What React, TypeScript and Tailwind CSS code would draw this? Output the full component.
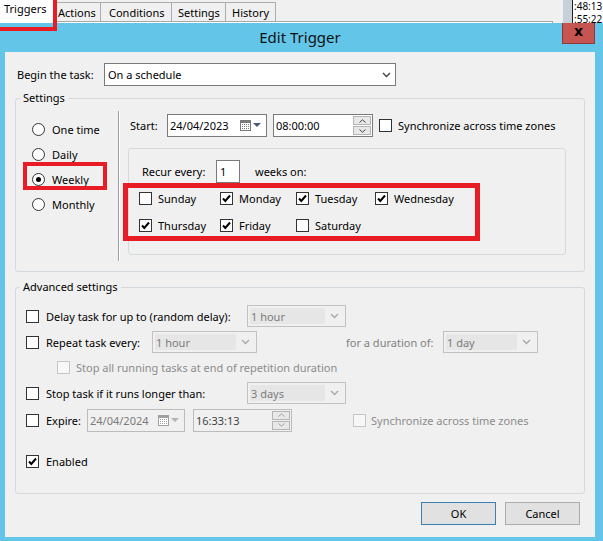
import React from 'react';

function Check({ checked = false, disabled = false }: { checked?: boolean; disabled?: boolean }) {
  return (
    <span
      className={`flex h-[13px] w-[13px] shrink-0 items-center justify-center border ${
        disabled ? 'border-[#c6c6c6] bg-[#f7f7f7]' : 'border-[#333] bg-white'
      }`}
    >
      {checked && (
        <svg width="11" height="11" viewBox="0 0 11 11">
          <path d="M2 5.5 L4.3 8 L9 2.5" fill="none" stroke="#000" strokeWidth="2" />
        </svg>
      )}
    </span>
  );
}

function Radio({ on = false }: { on?: boolean }) {
  return (
    <span className="flex h-[13px] w-[13px] shrink-0 items-center justify-center rounded-full border border-[#333] bg-white">
      {on && <span className="h-[5px] w-[5px] rounded-full bg-black" />}
    </span>
  );
}

function Chevron({ color }: { color: string }) {
  return (
    <svg width="9" height="6" viewBox="0 0 9 6">
      <path d="M1 1 L4.5 4.5 L8 1" fill="none" stroke={color} strokeWidth="1.4" />
    </svg>
  );
}

function Combo({ value, className }: { value: string; className: string }) {
  return (
    <div className={`flex h-[22px] items-stretch border border-[#c2c2c2] bg-[#f0f0f0] p-[2px] ${className}`}>
      <span className="flex flex-1 items-center bg-[#e6e6e6] pl-[1px] text-[#7c7c7c]">{value}</span>
      <span className="flex w-[18px] items-center justify-center">
        <Chevron color="#a8a8a8" />
      </span>
    </div>
  );
}

function CalIcon({ disabled = false }: { disabled?: boolean }) {
  const c = disabled ? '#a0a0a0' : '#7a7a7a';
  const cells = [];
  for (let r = 0; r < 3; r++) {
    for (let k = 0; k < 4; k++) {
      cells.push(<rect key={`${r}-${k}`} x={2 + k * 2} y={4 + r * 2} width="1" height="1" fill={c} />);
    }
  }
  return (
    <span className="flex items-center gap-[2px]">
      <svg width="11" height="11" viewBox="0 0 11 11">
        <rect x="0.5" y="0.5" width="10" height="10" fill="#fff" stroke={c} />
        <rect x="1" y="1" width="9" height="2" fill={c} />
        {cells}
      </svg>
      <svg width="8" height="5" viewBox="0 0 8 5">
        <path d="M0 0 H8 L4 4 Z" fill={disabled ? '#b4b4b4' : '#4a5a7a'} />
      </svg>
    </span>
  );
}

function DateBox({ value, disabled = false, className }: { value: string; disabled?: boolean; className: string }) {
  return (
    <div
      className={`flex h-[23px] items-center border pl-[2px] pr-[5px] ${className} ${
        disabled ? 'border-[#bcbcbc] bg-[#f0f0f0] text-[#7a7a7a]' : 'border-[#7a7a7a] bg-white text-black'
      }`}
    >
      <span className="flex-1">{value}</span>
      <CalIcon disabled={disabled} />
    </div>
  );
}

function Spin({ disabled = false }: { disabled?: boolean }) {
  const c = disabled ? '#a0a0a0' : '#444';
  return (
    <div className="flex h-full w-[18px] flex-col gap-[1px] py-[1px]">
      <span className="flex flex-1 items-center justify-center border border-[#b4b4b4] bg-[#e8e8e8]">
        <svg width="7" height="4" viewBox="0 0 7 4">
          <path d="M0.5 3.5 L3.5 0.8 L6.5 3.5" fill="none" stroke={c} strokeWidth="1" />
        </svg>
      </span>
      <span className="flex flex-1 items-center justify-center border border-[#b4b4b4] bg-[#e8e8e8]">
        <svg width="7" height="4" viewBox="0 0 7 4">
          <path d="M0.5 0.5 L3.5 3.2 L6.5 0.5" fill="none" stroke={c} strokeWidth="1" />
        </svg>
      </span>
    </div>
  );
}

function TimeBox({ value, disabled = false, className }: { value: string; disabled?: boolean; className: string }) {
  return (
    <div
      className={`flex h-[23px] items-center border pl-[2px] pr-[1px] ${className} ${
        disabled ? 'border-[#bcbcbc] bg-[#f0f0f0] text-[#444]' : 'border-[#7a7a7a] bg-white text-black'
      }`}
    >
      <span className="flex-1">{value}</span>
      <Spin disabled={disabled} />
    </div>
  );
}

const days = [
  { name: 'Sunday', on: false },
  { name: 'Monday', on: true },
  { name: 'Tuesday', on: true },
  { name: 'Wednesday', on: true },
  { name: 'Thursday', on: true },
  { name: 'Friday', on: true },
  { name: 'Saturday', on: false },
];

export default function App() {
  return (
    <div className="relative h-[541px] w-[603px] overflow-hidden bg-[#f0f0f0] font-['Noto_Sans',sans-serif] text-[11px] leading-[15px] text-black">
      {/* tab strip of the window behind */}
      <div className="flex h-[23px]">
        <div className="flex w-[563px] flex-col">
          <div className="flex h-[21px] items-end">
            <div className="flex h-[21px] w-[53px] items-start bg-white pl-[4px] pt-[1px]">Triggers</div>
            <div className="flex h-[19px] w-[48px] items-center border-r border-t border-[#acacac] pl-[5px]">Actions</div>
            <div className="flex h-[19px] w-[71px] items-center border-r border-t border-[#acacac] pl-[8px]">Conditions</div>
            <div className="flex h-[19px] w-[54px] items-center border-r border-t border-[#acacac] pl-[6px]">Settings</div>
            <div className="flex h-[19px] w-[50px] items-center border-r border-t border-[#acacac] pl-[6px]">History</div>
          </div>
          <div className="flex h-[2px]">
            <div className="w-[53px] bg-white" />
            <div className="w-[500px] border-r border-t border-[#a8a8a8] bg-white" />
          </div>
        </div>
        <div className="w-[9px] bg-[#c6d0d7]" />
        <div className="flex-1 overflow-hidden border-l border-[#222] bg-white pl-[1px] text-[10px] leading-[13px]">
          <div>:48:13</div>
          <div>:55:22</div>
        </div>
      </div>

      {/* Edit Trigger dialog */}
      <div className="flex flex-col bg-[#63c6e9] pb-[4px] pl-[5px] pr-[8px]">
        <div className="grid h-[29px] grid-cols-[1fr_auto_1fr] items-start">
          <div />
          <div className="pt-[5px] text-[15px] leading-[18px] text-[#111]">Edit Trigger</div>
          <div className="flex justify-end">
            <button className="flex h-[21px] w-[33px] items-center justify-center border-x border-b border-[#8a3c3c] bg-[#c65450] pb-[3px] font-['DejaVu_Sans',sans-serif] text-[14px] font-bold text-black">
              x
            </button>
          </div>
        </div>

        <div className="flex h-[485px] flex-col bg-[#f0f0f0]">
          <div className="flex items-center pl-[12px] pt-[11px]">
            <span className="w-[87px]">Begin the task:</span>
            <div className="flex h-[23px] w-[292px] items-center border border-[#7a7a7a] bg-white pl-[3px] pr-[4px]">
              <span className="flex-1">On a schedule</span>
              <Chevron color="#444" />
            </div>
          </div>

          <fieldset className="ml-[10px] mt-[4px] w-[570px] rounded-[3px] border border-[#d3d9dd]">
            <legend className="ml-[4px] px-[3px] leading-[16px]">Settings</legend>
            <div className="flex pb-[10px]">
              <div className="flex w-[102px] flex-col pt-[11px]">
                {['One time', 'Daily', 'Weekly', 'Monthly'].map((label) => (
                  <div key={label} className="relative flex h-[25px] items-center gap-[7px] pl-[16px]">
                    <Radio on={label === 'Weekly'} />
                    <span>{label}</span>
                    {label === 'Weekly' && (
                      <span className="absolute left-[7px] top-[-5px] h-[28px] w-[84px] border-4 border-[#e81c24]" />
                    )}
                  </div>
                ))}
              </div>
              <div className="mt-[5px] h-[150px] w-[2px] border-l border-r border-l-[#a0a0a0] border-r-white" />
              <div className="flex flex-col">
                <div className="mt-[8px] flex items-center pl-[10px]">
                  <span className="w-[37px]">Start:</span>
                  <DateBox value="24/04/2023" className="w-[100px]" />
                  <TimeBox value="08:00:00" className="ml-[6px] w-[100px]" />
                  <span className="ml-[6px]">
                    <Check />
                  </span>
                  <span className="ml-[6px]">Synchronize across time zones</span>
                </div>
                <div className="ml-[8px] mt-[11px] h-[107px] w-[438px] rounded-[3px] border border-[#d3d9dd]">
                  <div className="flex items-center pl-[13px] pt-[11px]">
                    <span className="w-[74px]">Recur every:</span>
                    <div className="flex h-[23px] w-[24px] items-center border border-[#7a7a7a] bg-white pl-[3px]">1</div>
                    <span className="ml-[15px]">weeks on:</span>
                  </div>
                  <div className="relative mt-[2px] grid grid-cols-[81px_76px_79px_auto] pl-[10px]">
                    {days.map((d) => (
                      <div key={d.name} className="flex h-[27px] items-center gap-[6px]">
                        <Check checked={d.on} />
                        <span>{d.name}</span>
                      </div>
                    ))}
                    <span className="absolute left-[-6px] top-[-2px] h-[58px] w-[357px] border-[5px] border-[#e81c24]" />
                  </div>
                </div>
              </div>
            </div>
          </fieldset>

          <fieldset className="ml-[10px] mt-[7px] w-[570px] rounded-[3px] border border-[#d3d9dd]">
            <legend className="ml-[4px] px-[3px] leading-[16px]">Advanced settings</legend>
            <div className="flex flex-col pb-[21px] pl-[10px] pt-[10px]">
              <div className="flex h-[22px] items-center">
                <Check />
                <span className="ml-[7px] w-[201px]">Delay task for up to (random delay):</span>
                <Combo value="1 hour" className="w-[99px]" />
              </div>
              <div className="mt-[4px] flex h-[22px] items-center">
                <Check />
                <span className="ml-[7px] w-[106px]">Repeat task every:</span>
                <Combo value="1 hour" className="w-[105px]" />
                <span className="ml-[89px] w-[97px] text-[#808080]">for a duration of:</span>
                <Combo value="1 day" className="w-[95px]" />
              </div>
              <div className="mt-[3px] flex h-[22px] items-center">
                <span className="ml-[31px]">
                  <Check disabled />
                </span>
                <span className="ml-[6px] text-[#8c8c8c]">Stop all running tasks at end of repetition duration</span>
              </div>
              <div className="mt-[4px] flex h-[22px] items-center">
                <Check />
                <span className="ml-[7px] w-[201px]">Stop task if it runs longer than:</span>
                <Combo value="3 days" className="w-[99px]" />
              </div>
              <div className="mt-[5px] flex h-[22px] items-center">
                <Check />
                <span className="ml-[7px] w-[41px]">Expire:</span>
                <DateBox value="24/04/2024" disabled className="w-[98px]" />
                <TimeBox value="16:33:13" disabled className="ml-[8px] w-[99px]" />
                <span className="ml-[61px]">
                  <Check disabled />
                </span>
                <span className="ml-[5px] text-[#8c8c8c]">Synchronize across time zones</span>
              </div>
              <div className="mt-[19px] flex h-[22px] items-center">
                <Check checked />
                <span className="ml-[7px]">Enabled</span>
              </div>
            </div>
          </fieldset>

          <div className="mt-[8px] flex justify-end gap-[9px] pr-[15px]">
            <button className="h-[23px] w-[75px] border border-[#3c7fb1] bg-[#e1e1e1]">OK</button>
            <button className="h-[23px] w-[75px] border border-[#adadad] bg-[#e1e1e1]">Cancel</button>
          </div>
        </div>
      </div>

      {/* red annotation around the Triggers tab */}
      <span className="absolute left-0 top-0 h-[31px] w-[57px] border-b-4 border-r-4 border-[#e81c24]" />
    </div>
  );
}
